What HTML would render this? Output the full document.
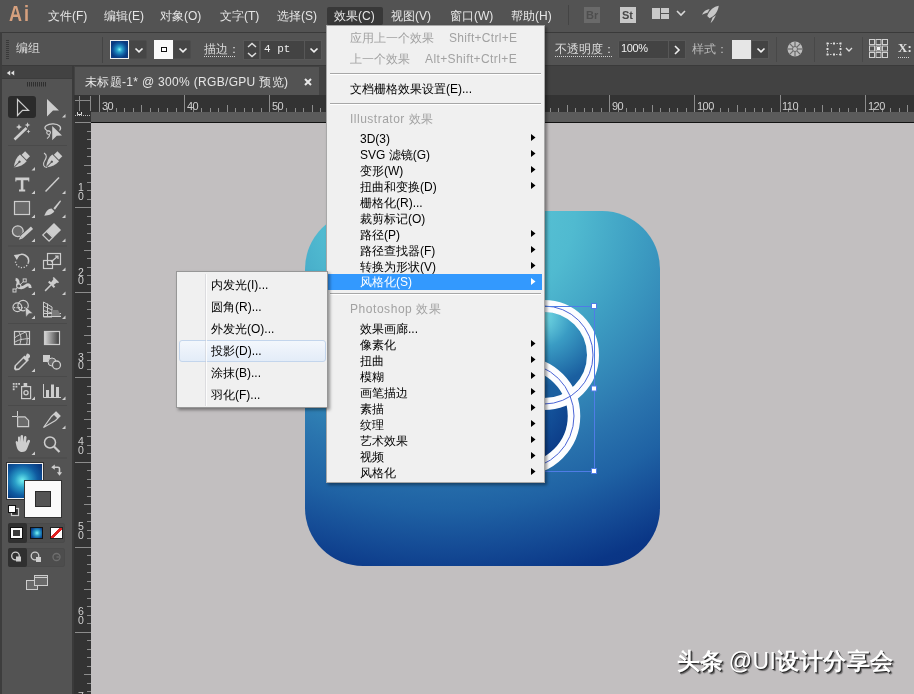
<!DOCTYPE html>
<html><head><meta charset="utf-8"><style>
*{box-sizing:border-box}
html,body{margin:0;padding:0;width:914px;height:694px;overflow:hidden;background:#535353;font-family:"Liberation Sans",sans-serif;}
#root{position:absolute;left:0;top:0;width:914px;height:694px;will-change:transform}
.a{position:absolute}
.t{position:absolute;white-space:nowrap;font-size:12px;line-height:16px;-webkit-font-smoothing:antialiased}
.mi{color:#e6e6e6}
.mm{color:#000}
.dis{color:#a2a2a2}
svg{position:absolute;overflow:visible}
</style></head><body><div id="root">
<div class="a" style="left:0px;top:0px;width:914px;height:32px;background:#535353"></div>
<div class="a" style="left:0px;top:32px;width:914px;height:34px;background:#535353;border-top:1px solid #3a3a3a;border-bottom:1px solid #3a3a3a"></div>
<div class="a" style="left:74px;top:66px;width:840px;height:29px;background:#424242"></div>
<div class="a" style="left:75px;top:67px;width:244px;height:28px;background:#535353"></div>
<div class="a" style="left:74px;top:95px;width:840px;height:17px;background:#333333"></div>
<div class="a" style="left:74px;top:95px;width:17px;height:599px;background:#333333"></div>
<div class="a" style="left:91px;top:112px;width:823px;height:10px;background:#5b5b5b"></div>
<div class="a" style="left:91px;top:122px;width:823px;height:572px;background:#c2bfc0;border-top:1px solid #121212"></div>
<div class="a" style="left:0px;top:66px;width:74px;height:628px;background:#535353;border-left:2px solid #434343;border-right:2px solid #3a3a3a"></div>
<div class="a" style="left:0px;top:32px;width:2px;height:662px;background:#3d3d3d"></div>
<div class="a" style="left:2px;top:66px;width:70px;height:13px;background:#424242;border-bottom:1px solid #3c3c3c"></div>
<div class="t " style="left:9px;top:1.0px;line-height:26px;font-size:22px;font-weight:bold;color:#d6a07e;letter-spacing:2.5px;transform:scaleX(0.82);transform-origin:0 0">Ai</div>
<div class="a" style="left:327px;top:7px;width:56px;height:18px;background:#383838;border-radius:2px"></div>
<div class="t mi" style="left:48px;top:8.0px;line-height:16px;">文件(F)</div>
<div class="t mi" style="left:104px;top:8.0px;line-height:16px;">编辑(E)</div>
<div class="t mi" style="left:160px;top:8.0px;line-height:16px;">对象(O)</div>
<div class="t mi" style="left:220px;top:8.0px;line-height:16px;">文字(T)</div>
<div class="t mi" style="left:277px;top:8.0px;line-height:16px;">选择(S)</div>
<div class="t mi" style="left:334px;top:8.0px;line-height:16px;">效果(C)</div>
<div class="t mi" style="left:391px;top:8.0px;line-height:16px;">视图(V)</div>
<div class="t mi" style="left:450px;top:8.0px;line-height:16px;">窗口(W)</div>
<div class="t mi" style="left:511px;top:8.0px;line-height:16px;">帮助(H)</div>
<div class="a" style="left:568px;top:5px;width:1px;height:20px;background:#444"></div>
<div class="a" style="left:584px;top:7px;width:16px;height:16px;background:#6a6a6a"></div>
<div class="t " style="left:586px;top:7.0px;line-height:16px;font-size:11px;font-weight:bold;color:#4e4e4e">Br</div>
<div class="a" style="left:620px;top:7px;width:16px;height:16px;background:#c8c8c8"></div>
<div class="t " style="left:622px;top:7.0px;line-height:16px;font-size:11px;font-weight:bold;color:#484848">St</div>
<div class="a" style="left:652px;top:8px;width:8px;height:11px;background:#c8c8c8"></div>
<div class="a" style="left:661px;top:8px;width:8px;height:5px;background:#c8c8c8"></div>
<div class="a" style="left:661px;top:14px;width:8px;height:5px;background:#c8c8c8"></div>
<svg style="left:676px;top:10px;" width="10" height="6" viewBox="0 0 10 6"><path d="M1 1 L5 5 L9 1" fill="none" stroke="#d8d8d8" stroke-width="1.6"/></svg>
<svg style="left:700px;top:5px;" width="22" height="20" viewBox="0 0 22 20"><path d="M18.8 0.8 C13.8 1.6 9.8 4.8 7.2 11 L9.6 13.2 C14.8 11.2 17.8 7 18.8 0.8 Z M2 9.8 C3.5 6.5 6 4.6 9.6 4.1 L7.8 7.4 C5.8 7.9 4 8.8 2 9.8 Z M10.6 18.2 C12.9 16 14.4 13.5 15.9 10.2 L12.6 12.6 C11.9 14.4 11.2 16.2 10.6 18.2 Z" fill="#c8c8c8"/></svg>
<div class="t mi" style="left:85px;top:74.0px;line-height:16px;letter-spacing:0.32px">未标题-1* @ 300% (RGB/GPU 预览)</div>
<svg style="left:304px;top:78px;" width="8" height="8" viewBox="0 0 8 8"><path d="M1 1 L7 7 M7 1 L1 7" stroke="#e8e8e8" stroke-width="2"/></svg>
<div class="a" style="left:6px;top:40px;width:3px;height:1px;background:#393939"></div>
<div class="a" style="left:6px;top:42px;width:3px;height:1px;background:#393939"></div>
<div class="a" style="left:6px;top:44px;width:3px;height:1px;background:#393939"></div>
<div class="a" style="left:6px;top:46px;width:3px;height:1px;background:#393939"></div>
<div class="a" style="left:6px;top:48px;width:3px;height:1px;background:#393939"></div>
<div class="a" style="left:6px;top:50px;width:3px;height:1px;background:#393939"></div>
<div class="a" style="left:6px;top:52px;width:3px;height:1px;background:#393939"></div>
<div class="a" style="left:6px;top:54px;width:3px;height:1px;background:#393939"></div>
<div class="a" style="left:6px;top:56px;width:3px;height:1px;background:#393939"></div>
<div class="a" style="left:6px;top:58px;width:3px;height:1px;background:#393939"></div>
<div class="t " style="left:16px;top:40.0px;line-height:16px;color:#d8d8d8">编组</div>
<div class="a" style="left:102px;top:37px;width:1px;height:26px;background:#444"></div>
<div class="a" style="left:110px;top:40px;width:19px;height:19px;border:1px solid #f0f0f0;background:radial-gradient(closest-side,#74f2f2 0%,#2aa2cc 30%,#0f5aa0 72%,#0a3a80 100%)"></div>
<div class="a" style="left:129px;top:40px;width:18px;height:19px;background:#464646;border-radius:0 2px 2px 0;border:1px solid #4c4c4c"></div>
<svg style="left:134px;top:47px;" width="10" height="6" viewBox="0 0 10 6"><path d="M1.5 1.5 L5 4.8 L8.5 1.5" fill="none" stroke="#f0f0f0" stroke-width="1.7"/></svg>
<div class="a" style="left:154px;top:40px;width:19px;height:19px;background:#fafafa"></div>
<div class="a" style="left:161px;top:46.5px;width:5.5px;height:5.5px;border:1.3px solid #111;background:#fff"></div>
<div class="a" style="left:173px;top:40px;width:18px;height:19px;background:#464646;border-radius:0 2px 2px 0;border:1px solid #4c4c4c"></div>
<svg style="left:178px;top:47px;" width="10" height="6" viewBox="0 0 10 6"><path d="M1.5 1.5 L5 4.8 L8.5 1.5" fill="none" stroke="#f0f0f0" stroke-width="1.7"/></svg>
<div class="t " style="left:204px;top:41.0px;line-height:16px;color:#dcdcdc">描边：</div>
<svg style="left:204px;top:56px;" width="32" height="1" viewBox="0 0 32 1"><line x1="0" y1="0.5" x2="32" y2="0.5" stroke="#cfcfcf" stroke-dasharray="1 1"/></svg>
<div class="a" style="left:243px;top:40px;width:17px;height:20px;background:#434343;border:1px solid #575757"></div>
<svg style="left:246px;top:42px;" width="12" height="16" viewBox="0 0 12 16"><path d="M2 5 L6 1.5 L10 5 M2 11 L6 14.5 L10 11" fill="none" stroke="#e0e0e0" stroke-width="1.4"/></svg>
<div class="a" style="left:260px;top:40px;width:45px;height:20px;background:#434343;border:1px solid #575757"></div>
<div class="t " style="left:264px;top:41.0px;line-height:16px;font-family:'Liberation Mono',monospace;font-size:11px;color:#ececec">4 pt</div>
<div class="a" style="left:304px;top:40px;width:18px;height:20px;background:#434343;border:1px solid #575757"></div>
<svg style="left:309px;top:47px;" width="10" height="6" viewBox="0 0 10 6"><path d="M1.5 1.5 L5 4.8 L8.5 1.5" fill="none" stroke="#f0f0f0" stroke-width="1.7"/></svg>
<div class="t " style="left:555px;top:41.0px;line-height:16px;color:#dcdcdc">不透明度：</div>
<svg style="left:555px;top:56px;" width="57" height="1" viewBox="0 0 57 1"><line x1="0" y1="0.5" x2="57" y2="0.5" stroke="#cfcfcf" stroke-dasharray="1 1"/></svg>
<div class="a" style="left:618px;top:40px;width:51px;height:19px;background:#434343;border:1px solid #575757;border-radius:2px 0 0 2px"></div>
<div class="t " style="left:621px;top:40.0px;line-height:16px;font-size:11px;letter-spacing:-0.4px;color:#f0f0f0">100%</div>
<div class="a" style="left:668px;top:40px;width:18px;height:19px;background:#434343;border:1px solid #575757"></div>
<svg style="left:674px;top:45px;" width="6" height="10" viewBox="0 0 6 10"><path d="M1 1 L5 5 L1 9" fill="none" stroke="#eee" stroke-width="1.6"/></svg>
<div class="t " style="left:692px;top:41.0px;line-height:16px;color:#b8b8b8">样式：</div>
<div class="a" style="left:732px;top:40px;width:19px;height:19px;background:#e6e6e6"></div>
<div class="a" style="left:751px;top:40px;width:18px;height:19px;background:#434343;border:1px solid #575757"></div>
<svg style="left:756px;top:47px;" width="10" height="6" viewBox="0 0 10 6"><path d="M1.5 1.5 L5 4.8 L8.5 1.5" fill="none" stroke="#f0f0f0" stroke-width="1.7"/></svg>
<div class="a" style="left:776px;top:37px;width:1px;height:25px;background:#484848"></div>
<svg style="left:787px;top:41px;" width="16" height="16" viewBox="0 0 16 16"><circle cx="8" cy="8" r="7.5" fill="#bdbdbd"/><g stroke="#6a6a6a" stroke-width="1.2"><line x1="8" y1="0.5" x2="8" y2="15.5"/><line x1="0.5" y1="8" x2="15.5" y2="8"/><line x1="2.7" y1="2.7" x2="13.3" y2="13.3"/><line x1="13.3" y1="2.7" x2="2.7" y2="13.3"/></g><circle cx="8" cy="8" r="2.5" fill="#bdbdbd" stroke="#6a6a6a"/></svg>
<div class="a" style="left:814px;top:37px;width:1px;height:25px;background:#484848"></div>
<svg style="left:826px;top:42px;" width="16" height="14" viewBox="0 0 16 14"><rect x="1.5" y="1.5" width="13" height="11" fill="none" stroke="#c8c8c8" stroke-width="1" stroke-dasharray="1.5 1.5"/><g fill="#e0e0e0"><rect x="0.5" y="0.5" width="2" height="2"/><rect x="13.5" y="0.5" width="2" height="2"/><rect x="0.5" y="11.5" width="2" height="2"/><rect x="13.5" y="11.5" width="2" height="2"/><rect x="7" y="11.5" width="2" height="2"/><rect x="7" y="0.5" width="2" height="2"/><rect x="0.5" y="6" width="2" height="2"/><rect x="13.5" y="6" width="2" height="2"/></g></svg>
<svg style="left:845px;top:47px;" width="8" height="5" viewBox="0 0 8 5"><path d="M1 1 L4 4 L7 1" fill="none" stroke="#ddd" stroke-width="1.3"/></svg>
<div class="a" style="left:862px;top:37px;width:1px;height:25px;background:#484848"></div>
<svg style="left:869px;top:39px;" width="19" height="19" viewBox="0 0 19 19"><g fill="none" stroke="#d0d0d0" stroke-width="1"><rect x="0.5" y="0.5" width="5" height="5"/><rect x="7" y="0.5" width="5" height="5"/><rect x="13.5" y="0.5" width="5" height="5"/><rect x="0.5" y="7" width="5" height="5"/><rect x="13.5" y="7" width="5" height="5"/><rect x="0.5" y="13.5" width="5" height="5"/><rect x="7" y="13.5" width="5" height="5"/><rect x="13.5" y="13.5" width="5" height="5"/><rect x="7" y="7" width="5" height="5"/></g><rect x="8" y="8" width="3" height="3" fill="#f4f4f4"/></svg>
<div class="t " style="left:898px;top:40.0px;line-height:16px;font-family:'Liberation Serif',serif;font-weight:bold;font-size:13px;color:#e0e0e0">X:</div>
<svg style="left:898px;top:57px;" width="12" height="1" viewBox="0 0 12 1"><line x1="0" y1="0.5" x2="12" y2="0.5" stroke="#cfcfcf" stroke-dasharray="1 1"/></svg>
<svg style="left:0;top:0" width="914" height="694"><g stroke="#8c8c8c" stroke-width="1" shape-rendering="crispEdges"><line x1="99.4" y1="95" x2="99.4" y2="112"/><line x1="107.9" y1="107.5" x2="107.9" y2="112"/><line x1="116.4" y1="107.5" x2="116.4" y2="112"/><line x1="124.9" y1="107.5" x2="124.9" y2="112"/><line x1="133.4" y1="107.5" x2="133.4" y2="112"/><line x1="141.9" y1="105" x2="141.9" y2="112"/><line x1="150.4" y1="107.5" x2="150.4" y2="112"/><line x1="158.9" y1="107.5" x2="158.9" y2="112"/><line x1="167.5" y1="107.5" x2="167.5" y2="112"/><line x1="176.0" y1="107.5" x2="176.0" y2="112"/><line x1="184.5" y1="95" x2="184.5" y2="112"/><line x1="193.0" y1="107.5" x2="193.0" y2="112"/><line x1="201.5" y1="107.5" x2="201.5" y2="112"/><line x1="210.0" y1="107.5" x2="210.0" y2="112"/><line x1="218.5" y1="107.5" x2="218.5" y2="112"/><line x1="227.0" y1="105" x2="227.0" y2="112"/><line x1="235.5" y1="107.5" x2="235.5" y2="112"/><line x1="244.0" y1="107.5" x2="244.0" y2="112"/><line x1="252.5" y1="107.5" x2="252.5" y2="112"/><line x1="261.0" y1="107.5" x2="261.0" y2="112"/><line x1="269.5" y1="95" x2="269.5" y2="112"/><line x1="278.0" y1="107.5" x2="278.0" y2="112"/><line x1="286.6" y1="107.5" x2="286.6" y2="112"/><line x1="295.1" y1="107.5" x2="295.1" y2="112"/><line x1="303.6" y1="107.5" x2="303.6" y2="112"/><line x1="312.1" y1="105" x2="312.1" y2="112"/><line x1="320.6" y1="107.5" x2="320.6" y2="112"/><line x1="329.1" y1="107.5" x2="329.1" y2="112"/><line x1="337.6" y1="107.5" x2="337.6" y2="112"/><line x1="346.1" y1="107.5" x2="346.1" y2="112"/><line x1="354.6" y1="95" x2="354.6" y2="112"/><line x1="363.1" y1="107.5" x2="363.1" y2="112"/><line x1="371.6" y1="107.5" x2="371.6" y2="112"/><line x1="380.1" y1="107.5" x2="380.1" y2="112"/><line x1="388.6" y1="107.5" x2="388.6" y2="112"/><line x1="397.1" y1="105" x2="397.1" y2="112"/><line x1="405.7" y1="107.5" x2="405.7" y2="112"/><line x1="414.2" y1="107.5" x2="414.2" y2="112"/><line x1="422.7" y1="107.5" x2="422.7" y2="112"/><line x1="431.2" y1="107.5" x2="431.2" y2="112"/><line x1="439.7" y1="95" x2="439.7" y2="112"/><line x1="448.2" y1="107.5" x2="448.2" y2="112"/><line x1="456.7" y1="107.5" x2="456.7" y2="112"/><line x1="465.2" y1="107.5" x2="465.2" y2="112"/><line x1="473.7" y1="107.5" x2="473.7" y2="112"/><line x1="482.2" y1="105" x2="482.2" y2="112"/><line x1="490.7" y1="107.5" x2="490.7" y2="112"/><line x1="499.2" y1="107.5" x2="499.2" y2="112"/><line x1="507.7" y1="107.5" x2="507.7" y2="112"/><line x1="516.2" y1="107.5" x2="516.2" y2="112"/><line x1="524.8" y1="95" x2="524.8" y2="112"/><line x1="533.3" y1="107.5" x2="533.3" y2="112"/><line x1="541.8" y1="107.5" x2="541.8" y2="112"/><line x1="550.3" y1="107.5" x2="550.3" y2="112"/><line x1="558.8" y1="107.5" x2="558.8" y2="112"/><line x1="567.3" y1="105" x2="567.3" y2="112"/><line x1="575.8" y1="107.5" x2="575.8" y2="112"/><line x1="584.3" y1="107.5" x2="584.3" y2="112"/><line x1="592.8" y1="107.5" x2="592.8" y2="112"/><line x1="601.3" y1="107.5" x2="601.3" y2="112"/><line x1="609.8" y1="95" x2="609.8" y2="112"/><line x1="618.3" y1="107.5" x2="618.3" y2="112"/><line x1="626.8" y1="107.5" x2="626.8" y2="112"/><line x1="635.3" y1="107.5" x2="635.3" y2="112"/><line x1="643.8" y1="107.5" x2="643.8" y2="112"/><line x1="652.4" y1="105" x2="652.4" y2="112"/><line x1="660.9" y1="107.5" x2="660.9" y2="112"/><line x1="669.4" y1="107.5" x2="669.4" y2="112"/><line x1="677.9" y1="107.5" x2="677.9" y2="112"/><line x1="686.4" y1="107.5" x2="686.4" y2="112"/><line x1="694.9" y1="95" x2="694.9" y2="112"/><line x1="703.4" y1="107.5" x2="703.4" y2="112"/><line x1="711.9" y1="107.5" x2="711.9" y2="112"/><line x1="720.4" y1="107.5" x2="720.4" y2="112"/><line x1="728.9" y1="107.5" x2="728.9" y2="112"/><line x1="737.4" y1="105" x2="737.4" y2="112"/><line x1="745.9" y1="107.5" x2="745.9" y2="112"/><line x1="754.4" y1="107.5" x2="754.4" y2="112"/><line x1="762.9" y1="107.5" x2="762.9" y2="112"/><line x1="771.5" y1="107.5" x2="771.5" y2="112"/><line x1="780.0" y1="95" x2="780.0" y2="112"/><line x1="788.5" y1="107.5" x2="788.5" y2="112"/><line x1="797.0" y1="107.5" x2="797.0" y2="112"/><line x1="805.5" y1="107.5" x2="805.5" y2="112"/><line x1="814.0" y1="107.5" x2="814.0" y2="112"/><line x1="822.5" y1="105" x2="822.5" y2="112"/><line x1="831.0" y1="107.5" x2="831.0" y2="112"/><line x1="839.5" y1="107.5" x2="839.5" y2="112"/><line x1="848.0" y1="107.5" x2="848.0" y2="112"/><line x1="856.5" y1="107.5" x2="856.5" y2="112"/><line x1="865.0" y1="95" x2="865.0" y2="112"/><line x1="873.5" y1="107.5" x2="873.5" y2="112"/><line x1="882.0" y1="107.5" x2="882.0" y2="112"/><line x1="890.6" y1="107.5" x2="890.6" y2="112"/><line x1="899.1" y1="107.5" x2="899.1" y2="112"/><line x1="907.6" y1="105" x2="907.6" y2="112"/><line x1="75" y1="122.8" x2="91" y2="122.8"/><line x1="86.5" y1="131.3" x2="91" y2="131.3"/><line x1="86.5" y1="139.8" x2="91" y2="139.8"/><line x1="86.5" y1="148.3" x2="91" y2="148.3"/><line x1="86.5" y1="156.8" x2="91" y2="156.8"/><line x1="84" y1="165.2" x2="91" y2="165.2"/><line x1="86.5" y1="173.7" x2="91" y2="173.7"/><line x1="86.5" y1="182.2" x2="91" y2="182.2"/><line x1="86.5" y1="190.7" x2="91" y2="190.7"/><line x1="86.5" y1="199.2" x2="91" y2="199.2"/><line x1="75" y1="207.7" x2="91" y2="207.7"/><line x1="86.5" y1="216.2" x2="91" y2="216.2"/><line x1="86.5" y1="224.7" x2="91" y2="224.7"/><line x1="86.5" y1="233.2" x2="91" y2="233.2"/><line x1="86.5" y1="241.7" x2="91" y2="241.7"/><line x1="84" y1="250.1" x2="91" y2="250.1"/><line x1="86.5" y1="258.6" x2="91" y2="258.6"/><line x1="86.5" y1="267.1" x2="91" y2="267.1"/><line x1="86.5" y1="275.6" x2="91" y2="275.6"/><line x1="86.5" y1="284.1" x2="91" y2="284.1"/><line x1="75" y1="292.6" x2="91" y2="292.6"/><line x1="86.5" y1="301.1" x2="91" y2="301.1"/><line x1="86.5" y1="309.6" x2="91" y2="309.6"/><line x1="86.5" y1="318.1" x2="91" y2="318.1"/><line x1="86.5" y1="326.6" x2="91" y2="326.6"/><line x1="84" y1="335.1" x2="91" y2="335.1"/><line x1="86.5" y1="343.5" x2="91" y2="343.5"/><line x1="86.5" y1="352.0" x2="91" y2="352.0"/><line x1="86.5" y1="360.5" x2="91" y2="360.5"/><line x1="86.5" y1="369.0" x2="91" y2="369.0"/><line x1="75" y1="377.5" x2="91" y2="377.5"/><line x1="86.5" y1="386.0" x2="91" y2="386.0"/><line x1="86.5" y1="394.5" x2="91" y2="394.5"/><line x1="86.5" y1="403.0" x2="91" y2="403.0"/><line x1="86.5" y1="411.5" x2="91" y2="411.5"/><line x1="84" y1="419.9" x2="91" y2="419.9"/><line x1="86.5" y1="428.4" x2="91" y2="428.4"/><line x1="86.5" y1="436.9" x2="91" y2="436.9"/><line x1="86.5" y1="445.4" x2="91" y2="445.4"/><line x1="86.5" y1="453.9" x2="91" y2="453.9"/><line x1="75" y1="462.4" x2="91" y2="462.4"/><line x1="86.5" y1="470.9" x2="91" y2="470.9"/><line x1="86.5" y1="479.4" x2="91" y2="479.4"/><line x1="86.5" y1="487.9" x2="91" y2="487.9"/><line x1="86.5" y1="496.4" x2="91" y2="496.4"/><line x1="84" y1="504.9" x2="91" y2="504.9"/><line x1="86.5" y1="513.3" x2="91" y2="513.3"/><line x1="86.5" y1="521.8" x2="91" y2="521.8"/><line x1="86.5" y1="530.3" x2="91" y2="530.3"/><line x1="86.5" y1="538.8" x2="91" y2="538.8"/><line x1="75" y1="547.3" x2="91" y2="547.3"/><line x1="86.5" y1="555.8" x2="91" y2="555.8"/><line x1="86.5" y1="564.3" x2="91" y2="564.3"/><line x1="86.5" y1="572.8" x2="91" y2="572.8"/><line x1="86.5" y1="581.3" x2="91" y2="581.3"/><line x1="84" y1="589.8" x2="91" y2="589.8"/><line x1="86.5" y1="598.2" x2="91" y2="598.2"/><line x1="86.5" y1="606.7" x2="91" y2="606.7"/><line x1="86.5" y1="615.2" x2="91" y2="615.2"/><line x1="86.5" y1="623.7" x2="91" y2="623.7"/><line x1="75" y1="632.2" x2="91" y2="632.2"/><line x1="86.5" y1="640.7" x2="91" y2="640.7"/><line x1="86.5" y1="649.2" x2="91" y2="649.2"/><line x1="86.5" y1="657.7" x2="91" y2="657.7"/><line x1="86.5" y1="666.2" x2="91" y2="666.2"/><line x1="84" y1="674.7" x2="91" y2="674.7"/><line x1="86.5" y1="683.1" x2="91" y2="683.1"/><line x1="86.5" y1="691.6" x2="91" y2="691.6"/></g></svg>
<div class="t " style="left:102px;top:100.0px;line-height:12px;font-size:11px;color:#d0d0d0;letter-spacing:-0.5px">30</div>
<div class="t " style="left:187px;top:100.0px;line-height:12px;font-size:11px;color:#d0d0d0;letter-spacing:-0.5px">40</div>
<div class="t " style="left:272px;top:100.0px;line-height:12px;font-size:11px;color:#d0d0d0;letter-spacing:-0.5px">50</div>
<div class="t " style="left:357px;top:100.0px;line-height:12px;font-size:11px;color:#d0d0d0;letter-spacing:-0.5px">60</div>
<div class="t " style="left:442px;top:100.0px;line-height:12px;font-size:11px;color:#d0d0d0;letter-spacing:-0.5px">70</div>
<div class="t " style="left:527px;top:100.0px;line-height:12px;font-size:11px;color:#d0d0d0;letter-spacing:-0.5px">80</div>
<div class="t " style="left:612px;top:100.0px;line-height:12px;font-size:11px;color:#d0d0d0;letter-spacing:-0.5px">90</div>
<div class="t " style="left:697px;top:100.0px;line-height:12px;font-size:11px;color:#d0d0d0;letter-spacing:-0.5px">100</div>
<div class="t " style="left:782px;top:100.0px;line-height:12px;font-size:11px;color:#d0d0d0;letter-spacing:-0.5px">110</div>
<div class="t " style="left:868px;top:100.0px;line-height:12px;font-size:11px;color:#d0d0d0;letter-spacing:-0.5px">120</div>
<div class="t " style="left:78px;top:181.7px;line-height:10px;font-size:10.5px;color:#d0d0d0">1</div>
<div class="t " style="left:78px;top:190.5px;line-height:10px;font-size:10.5px;color:#d0d0d0">0</div>
<div class="t " style="left:78px;top:266.6px;line-height:10px;font-size:10.5px;color:#d0d0d0">2</div>
<div class="t " style="left:78px;top:275.40000000000003px;line-height:10px;font-size:10.5px;color:#d0d0d0">0</div>
<div class="t " style="left:78px;top:351.5px;line-height:10px;font-size:10.5px;color:#d0d0d0">3</div>
<div class="t " style="left:78px;top:360.3px;line-height:10px;font-size:10.5px;color:#d0d0d0">0</div>
<div class="t " style="left:78px;top:436.40000000000003px;line-height:10px;font-size:10.5px;color:#d0d0d0">4</div>
<div class="t " style="left:78px;top:445.20000000000005px;line-height:10px;font-size:10.5px;color:#d0d0d0">0</div>
<div class="t " style="left:78px;top:521.3px;line-height:10px;font-size:10.5px;color:#d0d0d0">5</div>
<div class="t " style="left:78px;top:530.0999999999999px;line-height:10px;font-size:10.5px;color:#d0d0d0">0</div>
<div class="t " style="left:78px;top:606.2px;line-height:10px;font-size:10.5px;color:#d0d0d0">6</div>
<div class="t " style="left:78px;top:615.0px;line-height:10px;font-size:10.5px;color:#d0d0d0">0</div>
<div class="t " style="left:78px;top:691.1px;line-height:10px;font-size:10.5px;color:#d0d0d0">7</div>
<div class="t " style="left:78px;top:699.9px;line-height:10px;font-size:10.5px;color:#d0d0d0">0</div>
<svg style="left:0;top:0" width="914" height="694"><g stroke="#8a8a8a" stroke-width="1" shape-rendering="crispEdges"><line x1="79.5" y1="96" x2="79.5" y2="111"/><line x1="90.5" y1="96" x2="90.5" y2="111"/><line x1="75" y1="100.5" x2="90" y2="100.5"/></g><path d="M77.5 112 V114.5 H81.5 V112" fill="none" stroke="#ddd" stroke-width="1"/><line x1="75" y1="115.5" x2="91" y2="115.5" stroke="#bbb" stroke-dasharray="1 1"/></svg>
<svg style="left:0;top:0" width="914" height="694"><defs><linearGradient id="gt" x1="0" x2="1"><stop offset="0" stop-color="#d8d8d8"/><stop offset="1" stop-color="#3a3a3a"/></linearGradient></defs><path d="M10.2 70.6 L6.8 73 L10.2 75.4 Z M14.2 70.6 L10.8 73 L14.2 75.4 Z" fill="#e0e0e0"/><rect x="27" y="82" width="1" height="4.5" fill="#2e2e2e"/><rect x="29" y="82" width="1" height="4.5" fill="#2e2e2e"/><rect x="31" y="82" width="1" height="4.5" fill="#2e2e2e"/><rect x="33" y="82" width="1" height="4.5" fill="#2e2e2e"/><rect x="35" y="82" width="1" height="4.5" fill="#2e2e2e"/><rect x="37" y="82" width="1" height="4.5" fill="#2e2e2e"/><rect x="39" y="82" width="1" height="4.5" fill="#2e2e2e"/><rect x="41" y="82" width="1" height="4.5" fill="#2e2e2e"/><rect x="43" y="82" width="1" height="4.5" fill="#2e2e2e"/><rect x="45" y="82" width="1" height="4.5" fill="#2e2e2e"/><line x1="8" y1="145.5" x2="67" y2="145.5" stroke="#4a4a4a" stroke-width="1"/><line x1="8" y1="246" x2="67" y2="246" stroke="#4a4a4a" stroke-width="1"/><line x1="8" y1="323.5" x2="67" y2="323.5" stroke="#4a4a4a" stroke-width="1"/><line x1="8" y1="376.5" x2="67" y2="376.5" stroke="#4a4a4a" stroke-width="1"/><line x1="8" y1="405.5" x2="67" y2="405.5" stroke="#4a4a4a" stroke-width="1"/><line x1="8" y1="458" x2="67" y2="458" stroke="#4a4a4a" stroke-width="1"/><rect x="8" y="96" width="28" height="22" rx="3" fill="#2b2b2b"/><path d="M17.5 99.5 L28.5 110.3 L22.5 110.3 L17.5 115.5 Z" fill="none" stroke="#cdcdcd" stroke-width="1.2" stroke-linejoin="miter"/><path d="M47 99 L59 110.5 L53 110.5 L47 116.5 Z" fill="#cdcdcd"/><path d="M65.5 117.5 L65.5 114.0 L62.0 117.5 Z" fill="#cdcdcd"/><path d="M14.5 139.5 L26.5 128" stroke="#cdcdcd" stroke-width="2.6"/><path d="M19 124 L19.9 126.1 L22 127 L19.9 127.9 L19 130 L18.1 127.9 L16 127 L18.1 126.1 Z" fill="#cdcdcd"/><path d="M27.5 122.2 L28.34 124.16 L30.3 125 L28.34 125.84 L27.5 127.8 L26.66 125.84 L24.7 125 L26.66 124.16 Z" fill="#cdcdcd"/><path d="M28.5 129.5 L29.1 130.9 L30.5 131.5 L29.1 132.1 L28.5 133.5 L27.9 132.1 L26.5 131.5 L27.9 130.9 Z" fill="#cdcdcd"/><path d="M50 131.5 C45 131 43.5 127.5 46.5 125.5 C50 123 57 123.5 59.5 126 C61 127.5 60.5 129.5 59.5 130.5" fill="none" stroke="#cdcdcd" stroke-width="1.2"/><circle cx="48.6" cy="132.6" r="1.9" fill="none" stroke="#cdcdcd" stroke-width="1.1"/><path d="M49.6 134.4 C49.6 136.4 48.6 137.6 47 138.6" fill="none" stroke="#cdcdcd" stroke-width="1.2"/><path d="M52.2 126 L62 135.5 L56.8 135.8 L52.2 140.2 Z" fill="#cdcdcd"/><g transform="translate(20.3,161) rotate(45) scale(1.08)"><rect x="-3.2" y="-9.5" width="6.4" height="4.6" fill="#cdcdcd"/><path d="M-4.4 -4 H4.4 C5 0 3.2 4.5 0 8.5 C-3.2 4.5 -5 0 -4.4 -4 Z" fill="#cdcdcd"/><path d="M0 8.5 V1.5" stroke="#535353" stroke-width="0.9"/><circle cx="0" cy="1" r="1.1" fill="#535353"/></g><path d="M35 170.5 L35 167.0 L31.5 170.5 Z" fill="#cdcdcd"/><g transform="translate(52.6,161) rotate(45) scale(1.08)"><rect x="-3.2" y="-9.5" width="6.4" height="4.6" fill="#cdcdcd"/><path d="M-4.4 -4 H4.4 C5 0 3.2 4.5 0 8.5 C-3.2 4.5 -5 0 -4.4 -4 Z" fill="#cdcdcd"/><path d="M0 8.5 V1.5" stroke="#535353" stroke-width="0.9"/><circle cx="0" cy="1" r="1.1" fill="#535353"/></g><path d="M44 153 C47.5 155 46.5 158 44.5 161 C42.5 164 43.5 167.5 47 167.5" fill="none" stroke="#cdcdcd" stroke-width="1.1"/><path d="M15.3 177.6 H29.3 V181.5 H28.2 V180.2 H23.4 V189.4 H25.2 V191.5 H19 V189.4 H20.8 V180.2 H16.4 V181.5 H15.3 Z" fill="#cdcdcd"/><path d="M35 194 L35 190.5 L31.5 194 Z" fill="#cdcdcd"/><path d="M45.5 191.5 L59 177.5" stroke="#cdcdcd" stroke-width="1.5"/><path d="M65.5 194 L65.5 190.5 L62.0 194 Z" fill="#cdcdcd"/><rect x="14.5" y="201.5" width="15" height="13" fill="#6a6a6a" stroke="#cdcdcd" stroke-width="1.2"/><path d="M35 218 L35 214.5 L31.5 218 Z" fill="#cdcdcd"/><path d="M60.2 200.2 L53.4 208.2 L55 209.8 L61 201.2 Z" fill="#cdcdcd"/><path d="M51.6 208.6 C48 208.6 46 211.5 44.3 215.8 C48.5 215.6 53 214 54.3 211.3 Z" fill="#cdcdcd"/><path d="M65.5 218 L65.5 214.5 L62.0 218 Z" fill="#cdcdcd"/><circle cx="17.8" cy="231.2" r="5.4" fill="#6a6a6a" stroke="#cdcdcd" stroke-width="1.3"/><path d="M21.2 237.6 L32.3 227.6" stroke="#535353" stroke-width="5"/><path d="M21.5 237.3 L32 227.8" stroke="#cdcdcd" stroke-width="3.2"/><path d="M20.4 236 L22.6 238.4 L18.8 239.8 Z" fill="#cdcdcd"/><path d="M35 242 L35 238.5 L31.5 242 Z" fill="#cdcdcd"/><g transform="translate(51.5,232.5) rotate(-45)"><rect x="-2.5" y="-5" width="11" height="10" fill="#cdcdcd"/><rect x="-7.9" y="-4.4" width="5.2" height="8.8" fill="#535353" stroke="#cdcdcd" stroke-width="1.2"/></g><path d="M65.5 242 L65.5 238.5 L62.0 242 Z" fill="#cdcdcd"/><path d="M17.2 256.6 A6.5 6.5 0 0 1 28.3 262.7" fill="none" stroke="#cdcdcd" stroke-width="1.5"/><path d="M28.3 262.7 A6.5 6.5 0 0 1 15.5 261.5" fill="none" stroke="#cdcdcd" stroke-width="1.4" stroke-dasharray="1.2 1.6"/><path d="M13.8 255 L20 254.2 L16.8 260 Z" fill="#cdcdcd"/><path d="M35 271 L35 267.5 L31.5 271 Z" fill="#cdcdcd"/><rect x="43.5" y="260.5" width="9" height="8" fill="none" stroke="#cdcdcd" stroke-width="1.2"/><rect x="47.5" y="253.5" width="13" height="11" fill="none" stroke="#cdcdcd" stroke-width="1.2"/><path d="M51 262 L58 256 M55 256 H58 V259" fill="none" stroke="#cdcdcd" stroke-width="1.2"/><path d="M65.5 271 L65.5 267.5 L62.0 271 Z" fill="#cdcdcd"/><path d="M15.6 279.2 C18.2 279.6 18.6 282.6 17.6 285.2 C19.6 289.2 23 288 26 285.6 C28.4 283.8 30 284.8 30.2 288" fill="none" stroke="#cdcdcd" stroke-width="3"/><path d="M14.5 290.4 L24.6 280.3" stroke="#cdcdcd" stroke-width="0.9"/><circle cx="18.8" cy="286" r="2.1" fill="#535353" stroke="#cdcdcd" stroke-width="1.1"/><rect x="13" y="289" width="3" height="3" fill="#535353" stroke="#cdcdcd" stroke-width="1"/><rect x="23.2" y="278.9" width="3" height="3" fill="#535353" stroke="#cdcdcd" stroke-width="1"/><path d="M35 295 L35 291.5 L31.5 295 Z" fill="#cdcdcd"/><g transform="translate(51.5,284.5) rotate(45) scale(0.82)"><path d="M-4.5 -8.5 H4.5 V-6.5 H3 L2.2 -1.5 H5 V1 H-5 V-1.5 H-2.2 L-3 -6.5 H-4.5 Z" fill="#cdcdcd"/><rect x="-0.9" y="1" width="1.8" height="10" fill="#cdcdcd"/></g><path d="M65.5 295 L65.5 291.5 L62.0 295 Z" fill="#cdcdcd"/><circle cx="23.1" cy="305.6" r="5.2" fill="none" stroke="#cdcdcd" stroke-width="1.2"/><circle cx="17.4" cy="307.3" r="4.4" fill="none" stroke="#cdcdcd" stroke-width="1.2"/><path d="M14 307.6 H25" stroke="#cdcdcd" stroke-width="1.2" stroke-dasharray="1.2 1.3"/><path d="M25 306.2 L33 313.4 L28.8 313.7 L26 317.2 Z" fill="#cdcdcd" stroke="#535353" stroke-width="0.6"/><path d="M35 319 L35 315.5 L31.5 319 Z" fill="#cdcdcd"/><path d="M43.5 302 L52 307 L52 317 L43.5 317 Z M43.5 306 L52 310 M43.5 310.5 L52 313 M47.5 303.5 L47.5 317 M43.5 313.5 L61 313.5 M43.5 316.5 L61 316.5" fill="none" stroke="#cdcdcd" stroke-width="1"/><path d="M52 310 L58 310 L61 316 L52 316 Z" fill="#7a7a7a"/><path d="M65.5 319 L65.5 315.5 L62.0 319 Z" fill="#cdcdcd"/><rect x="14.5" y="331.5" width="15" height="13" fill="none" stroke="#cdcdcd" stroke-width="1.2"/><path d="M18.5 331.5 C21 335 22 339 19.5 345 M14.5 338 C17 335.5 21 334.5 25.5 332 M14.5 342.5 C17.5 340 22 339 29.5 338.5 M25.5 331.5 C27.5 336 27.5 341 26.5 345" fill="none" stroke="#cdcdcd" stroke-width="1"/><rect x="44.5" y="331.5" width="15" height="13" fill="url(#gt)" stroke="#cdcdcd" stroke-width="1.2"/><path d="M27 353.5 C29 353.5 30.5 355 30 357 L28 359 L29 360 L27.5 361.5 L19 370 L15.5 370.5 L14 369 L14.5 365.5 L23 357 L24.5 355.5 L25.5 356.5 Z" fill="#cdcdcd"/><path d="M16 368.5 L16 366 L23.5 358.5 L26 361 L18.5 368.5 Z" fill="#535353"/><path d="M35 372 L35 368.5 L31.5 372 Z" fill="#cdcdcd"/><rect x="43" y="355" width="7" height="7" fill="#cdcdcd"/><circle cx="52" cy="362" r="4" fill="#6a6a6a" stroke="#cdcdcd" stroke-width="1"/><circle cx="56.5" cy="365" r="4" fill="#535353" stroke="#cdcdcd" stroke-width="1.3"/><rect x="12.8" y="383" width="1.8" height="1.8" fill="#cdcdcd"/><rect x="15.5" y="383" width="1.8" height="1.8" fill="#cdcdcd"/><rect x="18.2" y="383" width="1.8" height="1.8" fill="#cdcdcd"/><rect x="12.8" y="385.7" width="1.8" height="1.8" fill="#cdcdcd"/><rect x="15.5" y="385.7" width="1.8" height="1.8" fill="#cdcdcd"/><rect x="12.8" y="388.4" width="1.8" height="1.8" fill="#cdcdcd"/><rect x="23.6" y="383" width="3.6" height="3.2" fill="#cdcdcd"/><rect x="21.6" y="386.6" width="9" height="12" fill="none" stroke="#cdcdcd" stroke-width="1.2"/><circle cx="26" cy="392.8" r="2.1" fill="none" stroke="#cdcdcd" stroke-width="1.3"/><path d="M35 400 L35 396.5 L31.5 400 Z" fill="#cdcdcd"/><path d="M43.5 384 V397.5 H61" fill="none" stroke="#cdcdcd" stroke-width="1"/><rect x="46" y="390" width="3" height="7.5" fill="#cdcdcd"/><rect x="51" y="384.5" width="3" height="13" fill="#cdcdcd"/><rect x="56" y="387" width="3" height="10.5" fill="#cdcdcd"/><path d="M65.5 400 L65.5 396.5 L62.0 400 Z" fill="#cdcdcd"/><path d="M12 416.5 H17 M17.5 411 V416" stroke="#cdcdcd" stroke-width="1"/><path d="M17.6 416.8 H25 L28.6 420.4 V426.6 H17.6 Z" fill="#6a6a6a" stroke="#cdcdcd" stroke-width="1.2"/><path d="M56 412 L60 416 L55.5 420.5 L43.5 427.5 L51.5 416.5 Z" fill="none" stroke="#cdcdcd" stroke-width="1.2"/><path d="M56 412 L60 416 L57.5 418.5 L53.5 414.5 Z" fill="#cdcdcd"/><path d="M65.5 429 L65.5 425.5 L62.0 429 Z" fill="#cdcdcd"/><path d="M16 444 C15 441 16.5 440 18 442 L18 437.5 C18 436 20 436 20 437.5 L20 442 L20.5 436 C21 434.5 23 434.5 23 436 L23 442 L24 437 C24.5 435.5 26.5 436 26.5 437.5 L26 443 L27.5 440.5 C28.5 439 30.5 440 30 441.5 L27 449 C26 451 25 452 22 452 C19 452 17 450 16 444 Z" fill="#cdcdcd"/><path d="M35 455 L35 451.5 L31.5 455 Z" fill="#cdcdcd"/><circle cx="50" cy="442.5" r="5.5" fill="none" stroke="#cdcdcd" stroke-width="1.5"/><path d="M54 446.5 L59.5 452" stroke="#cdcdcd" stroke-width="2.2"/></svg>
<div class="a" style="left:7px;top:463px;width:36px;height:36px;border:1.5px solid #f2f2f2;outline:1px solid #333;background:radial-gradient(circle at 42% 48%,#70f0f0 0%,#2a9ec8 28%,#0f5aa0 58%,#062a70 100%)"></div>
<div class="a" style="left:25px;top:481px;width:36px;height:36px;background:#fafafa;outline:1px solid #333"></div>
<div class="a" style="left:35px;top:491px;width:16px;height:16px;background:#535353;border:1px solid #2a2a2a"></div>
<svg style="left:0;top:0" width="914" height="694"><path d="M54 467.2 H58 Q59.5 467.2 59.5 468.7 V473" fill="none" stroke="#cdcdcd" stroke-width="1.6"/><path d="M51.2 467.2 L54.8 464.6 L54.8 469.8 Z M59.5 475.8 L56.9 472.2 L62.1 472.2 Z" fill="#cdcdcd"/><rect x="11.5" y="508.5" width="7" height="7" fill="#333" stroke="#cdcdcd" stroke-width="1.2"/><rect x="8.5" y="505.5" width="7" height="7" fill="#fff" stroke="#111" stroke-width="1"/></svg>
<div class="a" style="left:8px;top:523px;width:57px;height:20px;background:#4d4d4d;border:1px solid #4a4a4a;border-radius:2px"></div>
<div class="a" style="left:8px;top:523px;width:19px;height:20px;background:#303030;border-radius:2px"></div>
<div class="a" style="left:10px;top:527px;width:13px;height:12px;background:#111;border:1px solid #111"></div>
<div class="a" style="left:11px;top:528px;width:11px;height:10px;border:2px solid #fafafa;background:#3a3a3a"></div>
<div class="a" style="left:30px;top:527px;width:13px;height:12px;border:1px solid #111;background:radial-gradient(circle at 55% 50%,#7ff5f5 0%,#2a9ec8 35%,#0b4a96 75%,#08306a 100%)"></div>
<div class="a" style="left:50px;top:527px;width:13px;height:12px;border:1px solid #222;background:linear-gradient(135deg,#fff 0%,#fff 40%,#e02020 40%,#e02020 58%,#fff 58%,#fff 100%)"></div>
<div class="a" style="left:8px;top:548px;width:57px;height:19px;background:#4d4d4d;border:1px solid #4a4a4a;border-radius:2px"></div>
<div class="a" style="left:8px;top:548px;width:19px;height:19px;background:#303030;border-radius:2px"></div>
<svg style="left:0;top:0" width="914" height="694"><circle cx="15.5" cy="556" r="3.8" fill="none" stroke="#cdcdcd" stroke-width="1.3"/><rect x="16" y="556.5" width="5" height="5" fill="#cdcdcd"/><circle cx="35" cy="556" r="3.8" fill="#535353" stroke="#cdcdcd" stroke-width="1.3"/><rect x="36" y="557" width="5" height="5" fill="#cdcdcd"/><circle cx="56.5" cy="557" r="3.5" fill="none" stroke="#6e6e6e" stroke-width="1.3"/><path d="M56.5 557 L59 557" stroke="#6e6e6e" stroke-width="1.2"/><rect x="26.5" y="580.5" width="11" height="9" fill="#6a6a6a" stroke="#cdcdcd" stroke-width="1"/><rect x="34.5" y="575.5" width="13" height="10" fill="#6a6a6a" stroke="#cdcdcd" stroke-width="1"/><path d="M34.5 577.5 H47.5" stroke="#cdcdcd" stroke-width="1"/></svg>
<div class="a" style="left:305px;top:211px;width:355px;height:355px;border-radius:58px;background:radial-gradient(426px 373px at 40% 0%,#64ccd9 0%,#50bad0 30%,#3d9dc2 46%,#2a74ae 68%,#1f62a4 80%,#154c96 90%,#0a3686 100%,#082f80 110%)"></div>
<svg style="left:0;top:0" width="914" height="694"><defs><radialGradient id="rg1" cx="540" cy="316" r="70" gradientUnits="userSpaceOnUse"><stop offset="0" stop-color="#7ae2e8"/><stop offset="0.45" stop-color="#3a9cc4"/><stop offset="1" stop-color="#1a5fa0"/></radialGradient><radialGradient id="rg2" cx="505" cy="390" r="80" gradientUnits="userSpaceOnUse"><stop offset="0" stop-color="#2a7fb6"/><stop offset="0.6" stop-color="#14539b"/><stop offset="1" stop-color="#0b3a86"/></radialGradient></defs><circle cx="521" cy="416" r="47" fill="url(#rg2)"/><circle cx="544" cy="355" r="43" fill="url(#rg1)"/><circle cx="521" cy="416" r="53" fill="none" stroke="#fcfdff" stroke-width="12.5"/><circle cx="544" cy="355" r="49" fill="none" stroke="#fcfdff" stroke-width="12"/><circle cx="544" cy="355" r="49" fill="none" stroke="#4a64d6" stroke-width="1"/><circle cx="521" cy="416" r="53" fill="none" stroke="#4a64d6" stroke-width="1"/><path d="M480 306 H594 V471 H480" fill="none" stroke="#4f7ce6" stroke-width="1" shape-rendering="crispEdges"/><rect x="591.5" y="303.5" width="5" height="5" fill="#fff" stroke="#4f7ce6" stroke-width="1"/><rect x="591.5" y="386.0" width="5" height="5" fill="#fff" stroke="#4f7ce6" stroke-width="1"/><rect x="591.5" y="468.5" width="5" height="5" fill="#fff" stroke="#4f7ce6" stroke-width="1"/></svg>
<div class="a" style="left:326px;top:25px;width:219px;height:458px;background:#f0f0f0;border:1px solid #a8a8a8;box-shadow:2px 2px 3px rgba(0,0,0,.4)"></div>
<div class="t dis" style="left:350px;top:30.0px;line-height:16px;">应用上一个效果</div>
<div class="t dis" style="left:449px;top:30.0px;line-height:16px;letter-spacing:0.3px">Shift+Ctrl+E</div>
<div class="t dis" style="left:350px;top:51.0px;line-height:16px;">上一个效果</div>
<div class="t dis" style="left:425px;top:51.0px;line-height:16px;letter-spacing:0.4px">Alt+Shift+Ctrl+E</div>
<div class="a" style="left:330px;top:73px;width:211px;height:1px;background:#a7a7a7"></div>
<div class="a" style="left:330px;top:74px;width:211px;height:1px;background:#fff"></div>
<div class="t mm" style="left:350px;top:81.0px;line-height:16px;">文档栅格效果设置(E)...</div>
<div class="a" style="left:330px;top:103px;width:211px;height:1px;background:#a7a7a7"></div>
<div class="a" style="left:330px;top:104px;width:211px;height:1px;background:#fff"></div>
<div class="t dis" style="left:350px;top:110.5px;line-height:16px;letter-spacing:0.5px">Illustrator 效果</div>
<div class="t mm" style="left:360px;top:130.8px;line-height:16px;">3D(3)</div>
<div class="t mm" style="left:360px;top:146.8px;line-height:16px;">SVG 滤镜(G)</div>
<div class="t mm" style="left:360px;top:162.8px;line-height:16px;">变形(W)</div>
<div class="t mm" style="left:360px;top:178.8px;line-height:16px;">扭曲和变换(D)</div>
<div class="t mm" style="left:360px;top:194.8px;line-height:16px;">栅格化(R)...</div>
<div class="t mm" style="left:360px;top:210.8px;line-height:16px;">裁剪标记(O)</div>
<div class="t mm" style="left:360px;top:226.8px;line-height:16px;">路径(P)</div>
<div class="t mm" style="left:360px;top:242.8px;line-height:16px;">路径查找器(F)</div>
<div class="t mm" style="left:360px;top:258.8px;line-height:16px;">转换为形状(V)</div>
<div class="a" style="left:328px;top:274px;width:214px;height:16px;background:#3399fe"></div>
<div class="t " style="left:360px;top:274.0px;line-height:16px;color:#fff">风格化(S)</div>
<div class="a" style="left:330px;top:293px;width:211px;height:1px;background:#a7a7a7"></div>
<div class="a" style="left:330px;top:294px;width:211px;height:1px;background:#fff"></div>
<div class="t dis" style="left:350px;top:300.5px;line-height:16px;letter-spacing:0.55px">Photoshop 效果</div>
<div class="t mm" style="left:360px;top:320.8px;line-height:16px;">效果画廊...</div>
<div class="t mm" style="left:360px;top:336.8px;line-height:16px;">像素化</div>
<div class="t mm" style="left:360px;top:352.8px;line-height:16px;">扭曲</div>
<div class="t mm" style="left:360px;top:368.8px;line-height:16px;">模糊</div>
<div class="t mm" style="left:360px;top:384.8px;line-height:16px;">画笔描边</div>
<div class="t mm" style="left:360px;top:400.8px;line-height:16px;">素描</div>
<div class="t mm" style="left:360px;top:416.8px;line-height:16px;">纹理</div>
<div class="t mm" style="left:360px;top:432.8px;line-height:16px;">艺术效果</div>
<div class="t mm" style="left:360px;top:448.8px;line-height:16px;">视频</div>
<div class="t mm" style="left:360px;top:464.8px;line-height:16px;">风格化</div>
<svg style="left:0;top:0" width="914" height="694"><path d="M531 134.0 L535.5 137.5 L531 141.0 Z" fill="#000"/><path d="M531 150.0 L535.5 153.5 L531 157.0 Z" fill="#000"/><path d="M531 166.0 L535.5 169.5 L531 173.0 Z" fill="#000"/><path d="M531 182.0 L535.5 185.5 L531 189.0 Z" fill="#000"/><path d="M531 230.0 L535.5 233.5 L531 237.0 Z" fill="#000"/><path d="M531 246.0 L535.5 249.5 L531 253.0 Z" fill="#000"/><path d="M531 262.0 L535.5 265.5 L531 269.0 Z" fill="#000"/><path d="M531 278 L535.5 281.5 L531 285 Z" fill="#fff"/><path d="M531 340.0 L535.5 343.5 L531 347.0 Z" fill="#000"/><path d="M531 356.0 L535.5 359.5 L531 363.0 Z" fill="#000"/><path d="M531 372.0 L535.5 375.5 L531 379.0 Z" fill="#000"/><path d="M531 388.0 L535.5 391.5 L531 395.0 Z" fill="#000"/><path d="M531 404.0 L535.5 407.5 L531 411.0 Z" fill="#000"/><path d="M531 420.0 L535.5 423.5 L531 427.0 Z" fill="#000"/><path d="M531 436.0 L535.5 439.5 L531 443.0 Z" fill="#000"/><path d="M531 452.0 L535.5 455.5 L531 459.0 Z" fill="#000"/><path d="M531 468.0 L535.5 471.5 L531 475.0 Z" fill="#000"/></svg>
<div class="a" style="left:176px;top:271px;width:152px;height:137px;background:#f0f0f0;border:1px solid #979797;box-shadow:2px 2px 3px rgba(0,0,0,.4)"></div>
<div class="a" style="left:179px;top:340px;width:147px;height:22px;border:1px solid #c3d5ec;border-radius:3px;background:linear-gradient(#f3f7fc,#e3ecf8)"></div>
<div class="a" style="left:205px;top:274px;width:1px;height:132px;background:rgba(200,200,205,.5)"></div>
<div class="a" style="left:206px;top:274px;width:1px;height:132px;background:rgba(255,255,255,.8)"></div>
<div class="t mm" style="left:211px;top:276.5px;line-height:16px;">内发光(I)...</div>
<div class="t mm" style="left:211px;top:298.5px;line-height:16px;">圆角(R)...</div>
<div class="t mm" style="left:211px;top:320.5px;line-height:16px;">外发光(O)...</div>
<div class="t mm" style="left:211px;top:342.5px;line-height:16px;">投影(D)...</div>
<div class="t mm" style="left:211px;top:364.5px;line-height:16px;">涂抹(B)...</div>
<div class="t mm" style="left:211px;top:386.5px;line-height:16px;">羽化(F)...</div>
<div class="t " style="left:677px;top:648.0px;line-height:26px;font-size:23px;font-weight:bold;color:#fff;letter-spacing:0.4px;text-shadow:1px 1px 0 #2a2a2a,2px 2px 1px rgba(0,0,0,.45)">头条<span style="font-weight:normal;margin-left:5px">@UI</span>设计分享会</div>
</div></body></html>
